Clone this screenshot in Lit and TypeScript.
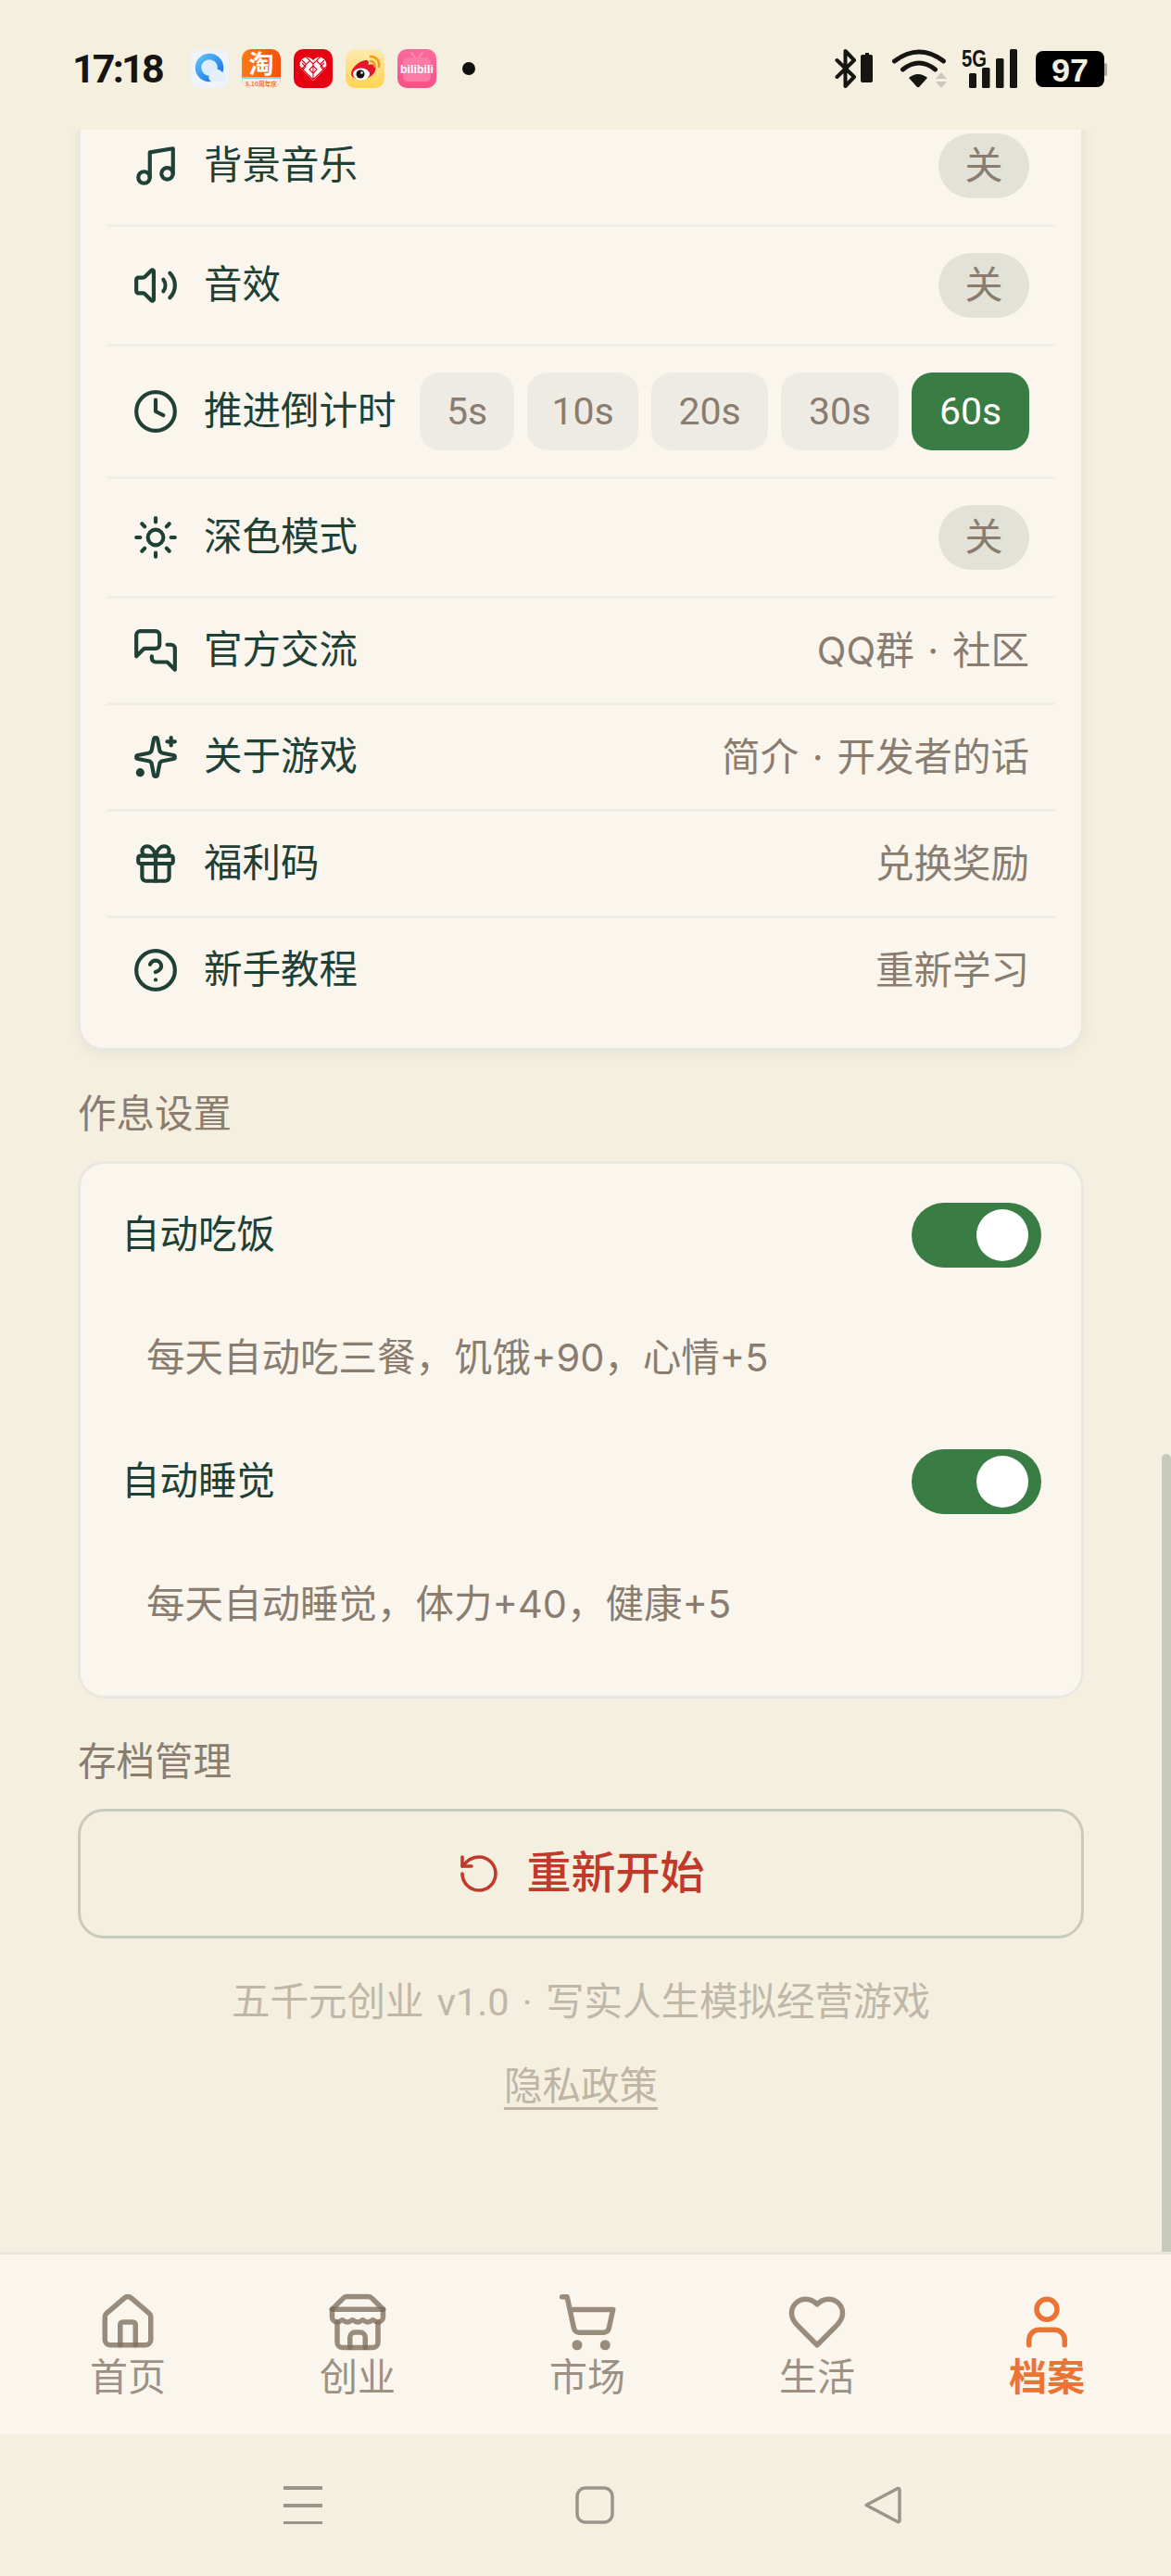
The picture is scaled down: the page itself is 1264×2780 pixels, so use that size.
import { LitElement, html, css, svg } from "lit";
import { customElement } from "lit/decorators.js";

const ICONS: Record<string, unknown> = {
  music: svg`<path d="M9 18V5l12-2v13"/><circle cx="6" cy="18" r="3"/><circle cx="18" cy="16" r="3"/>`,
  volume: svg`<path d="M11 4.702a.705.705 0 0 0-1.203-.498L6.413 7.587A1.4 1.4 0 0 1 5.416 8H3a1 1 0 0 0-1 1v6a1 1 0 0 0 1 1h2.416a1.4 1.4 0 0 1 .997.413l3.383 3.384A.705.705 0 0 0 11 19.298z"/><path d="M16 9a5 5 0 0 1 0 6"/><path d="M19.364 18.364a9 9 0 0 0 0-12.728"/>`,
  clock: svg`<circle cx="12" cy="12" r="10"/><path d="M12 6v6l4 2"/>`,
  sun: svg`<circle cx="12" cy="12" r="4"/><path d="M12 2v2"/><path d="M12 20v2"/><path d="m4.93 4.93 1.41 1.41"/><path d="m17.66 17.66 1.41 1.41"/><path d="M2 12h2"/><path d="M20 12h2"/><path d="m6.34 17.66-1.41 1.41"/><path d="m19.07 4.93-1.41 1.41"/>`,
  chat: svg`<path d="M14 9a2 2 0 0 1-2 2H6l-4 4V4a2 2 0 0 1 2-2h8a2 2 0 0 1 2 2z"/><path d="M18 9h2a2 2 0 0 1 2 2v11l-4-4h-6a2 2 0 0 1-2-2v-1"/>`,
  sparkles: svg`<path d="M11.017 2.814a1 1 0 0 1 1.966 0l1.051 5.558a2 2 0 0 0 1.594 1.594l5.558 1.051a1 1 0 0 1 0 1.966l-5.558 1.051a2 2 0 0 0-1.594 1.594l-1.051 5.558a1 1 0 0 1-1.966 0l-1.051-5.558a2 2 0 0 0-1.594-1.594l-5.558-1.051a1 1 0 0 1 0-1.966l5.558-1.051a2 2 0 0 0 1.594-1.594z"/><path d="M20 2v4"/><path d="M22 4h-4"/><circle cx="4" cy="20" r="1.200" fill="currentColor"/>`,
  gift: svg`<rect x="3" y="8" width="18" height="4" rx="1"/><path d="M12 8v13"/><path d="M19 12v7a2 2 0 0 1-2 2H7a2 2 0 0 1-2-2v-7"/><path d="M7.5 8a2.5 2.5 0 0 1 0-5A4.8 8 0 0 1 12 8a4.8 8 0 0 1 4.5-5 2.5 2.5 0 0 1 0 5"/>`,
  help: svg`<circle cx="12" cy="12" r="10"/><path d="M9.09 9a3 3 0 0 1 5.83 1c0 2-3 3-3 3"/><path d="M12 17h.01"/>`,
  reset: svg`<path d="M3 12a9 9 0 1 0 9-9 9.75 9.75 0 0 0-6.74 2.74L3 8"/><path d="M3 3v5h5"/>`,
  house: svg`<path d="M15 21v-8a1 1 0 0 0-1-1h-4a1 1 0 0 0-1 1v8"/><path d="M3 10a2 2 0 0 1 .709-1.528l7-5.999a2 2 0 0 1 2.582 0l7 5.999A2 2 0 0 1 21 10v9a2 2 0 0 1-2 2H5a2 2 0 0 1-2-2z"/>`,
  store: svg`<path d="m2 7 4.41-4.41A2 2 0 0 1 7.83 2h8.34a2 2 0 0 1 1.42.59L22 7"/><path d="M4 12v8a2 2 0 0 0 2 2h12a2 2 0 0 0 2-2v-8"/><path d="M15 22v-4a2 2 0 0 0-2-2h-2a2 2 0 0 0-2 2v4"/><path d="M2 7h20"/><path d="M22 7v3a2 2 0 0 1-2 2a2.7 2.7 0 0 1-1.59-.63.7.7 0 0 0-.82 0A2.7 2.7 0 0 1 16 12a2.7 2.7 0 0 1-1.59-.63.7.7 0 0 0-.82 0A2.7 2.7 0 0 1 12 12a2.7 2.7 0 0 1-1.59-.63.7.7 0 0 0-.82 0A2.7 2.7 0 0 1 8 12a2.7 2.7 0 0 1-1.59-.63.7.7 0 0 0-.82 0A2.7 2.7 0 0 1 4 12a2 2 0 0 1-2-2V7"/>`,
  cart: svg`<circle cx="8" cy="21" r="1"/><circle cx="19" cy="21" r="1"/><path d="M2.05 2.05h2l2.66 12.42a2 2 0 0 0 2 1.58h9.78a2 2 0 0 0 1.95-1.57l1.65-7.43H5.12"/>`,
  heart: svg`<path d="M19 14c1.49-1.46 3-3.21 3-5.5A5.5 5.5 0 0 0 16.5 3c-1.76 0-3 .5-4.5 2-1.5-1.5-2.74-2-4.5-2A5.5 5.5 0 0 0 2 8.5c0 2.3 1.5 4.05 3 5.5l7 7Z"/>`,
  user: svg`<path d="M19 21v-2a4 4 0 0 0-4-4H9a4 4 0 0 0-4 4v2"/><circle cx="12" cy="7" r="4"/>`,
};

const icon = (name: string, cls = "ico") =>
  html`<svg class=${cls} viewBox="0 0 24 24" fill="none" stroke="currentColor" stroke-width="2" stroke-linecap="round" stroke-linejoin="round">${ICONS[name]}</svg>`;

const appIcons = [
  svg`<defs><linearGradient id="qq" x1="0" y1="0" x2="1" y2="1"><stop offset="0" stop-color="#5cc0f7"/><stop offset="1" stop-color="#1470e6"/></linearGradient></defs>
    <rect width="42" height="42" rx="10" fill="#eef4fa"/>
    <circle cx="21" cy="20" r="12" fill="#dcecf9" stroke="url(#qq)" stroke-width="6.5"/>
    <path d="M23 35a5 5 0 0 1 0-9 6.5 6.5 0 0 1 11.5-1.5A5.5 5.5 0 0 1 36 35z" fill="#e4eff9"/>`,
  svg`<defs><linearGradient id="tb" x1="0" y1="0" x2="1" y2="0"><stop offset="0" stop-color="#ff7a12"/><stop offset="1" stop-color="#f4510b"/></linearGradient><clipPath id="tbc"><rect width="42" height="42" rx="10"/></clipPath></defs>
    <g clip-path="url(#tbc)"><rect width="42" height="42" fill="url(#tb)"/>
    <text x="21" y="26" text-anchor="middle" font-size="27" font-weight="700" fill="#fff" font-family="'Noto Sans CJK SC',sans-serif">淘</text>
    <rect y="30" width="42" height="12" fill="#f8efe2"/><rect y="30" width="42" height="2" fill="#8fd8c8"/>
    <text x="21" y="40" text-anchor="middle" font-size="6.5" font-weight="700" fill="#f0762b" font-family="'Noto Sans CJK SC',sans-serif" textLength="34" lengthAdjust="spacingAndGlyphs">5.10周年庆</text></g>`,
  svg`<defs><clipPath id="pdd"><path d="M21 34 7.500 20.500a8 8 0 0 1 13.500-8.500A8 8 0 0 1 34.500 20.500z"/></clipPath></defs>
    <rect width="42" height="42" rx="10" fill="#e60012"/>
    <path d="M21 34 7.500 20.500a8 8 0 0 1 13.500-8.500A8 8 0 0 1 34.500 20.500z" fill="#fff"/>
    <g clip-path="url(#pdd)" stroke="#e60012" stroke-width="1.100" fill="none">
      <path d="M5 17 21 33 37 17M5 25 17 13M37 25 25 13M13 8l8 8 8-8M21 16v17M9 12l4 4M33 12l-4 4"/>
      <path d="M9 15l4 4-4 4M33 15l-4 4 4 4M17 22l4 4 4-4-4-4z"/>
    </g>`,
  svg`<defs><linearGradient id="wb" x1="0" y1="0" x2="0" y2="1"><stop offset="0" stop-color="#fdeab0"/><stop offset="1" stop-color="#ffd452"/></linearGradient></defs>
    <rect width="42" height="42" rx="10" fill="url(#wb)"/>
    <path d="M6 27c0-7 9-14 15-15 4-.6 4.500 2 3.500 5 4-1 8-.5 8 3.500 0 7-8 12-15 12-6.500 0-11.500-2-11.500-5.500z" fill="#e6162d"/>
    <ellipse cx="17" cy="27" rx="9" ry="6.500" fill="#fff"/><circle cx="16" cy="27" r="4.500" fill="#111"/><circle cx="17.500" cy="25.500" r="1.300" fill="#fff"/>
    <path d="M27 8a9 9 0 0 1 9 11M27 13a4.500 4.500 0 0 1 4.500 5.500" fill="none" stroke="#f59a1b" stroke-width="2.600" stroke-linecap="round"/>`,
  svg`<defs><linearGradient id="bl" x1="0" y1="0" x2="0" y2="1"><stop offset="0" stop-color="#fb6a9c"/><stop offset="1" stop-color="#f84f88"/></linearGradient></defs>
    <rect width="42" height="42" rx="10" fill="url(#bl)"/>
    <path d="M15 4l4 5M27 4l-4 5" stroke="#fc8bb2" stroke-width="2" stroke-linecap="round"/>
    <rect x="6" y="9" width="30" height="26" rx="5" fill="#fb7aa6"/>
    <text x="21" y="26" text-anchor="middle" font-size="13" font-weight="700" fill="#fff" font-family="'Liberation Sans',sans-serif" textLength="36" lengthAdjust="spacingAndGlyphs">bilibili</text>`,
];

@customElement("app-root")
export class AppRoot extends LitElement {
  static styles = css`
    :host {
      display: flex;
      flex-direction: column;
      height: 2780px;
      overflow: hidden;
      background: #f5efdf;
      color: #1f4035;
      font-family: Roboto, "Noto Sans CJK SC", sans-serif;
      font-size: 41.5px;
      line-height: 56px;
    }
    .status {
      flex: none;
      height: 140px;
      box-sizing: border-box;
      padding: 53px 68px 0 78px;
      display: flex;
      align-items: flex-start;
    }
    .time {
      width: 127px;
      font-size: 43px;
      font-weight: 700;
      line-height: 42px;
      letter-spacing: -2.8px;
      color: #161512;
      font-family: Roboto, sans-serif;
    }
    .apps { display: flex; gap: 14px; }
    .apps svg { width: 42px; height: 42px; display: block; }
    .dot { width: 14px; height: 14px; border-radius: 50%; background: #111; margin: 14px 0 0 28px; }
    .sys { width: 295px; height: 44px; margin-left: auto; display: block; margin-top: -1px; }
    .main { flex: 1; min-height: 0; display: flex; overflow: hidden; }
    .scroll { flex: 1; min-width: 0; box-sizing: border-box; padding: 0 84px; }
    .track { flex: none; width: 10px; padding-top: 1429px; box-sizing: border-box; }
    .thumb { height: 100%; background: #c8cbbb; border-radius: 5px 5px 0 0; }
    .card {
      background: #faf6ee;
      border: 3px solid #e8e8e3;
      border-radius: 28px;
      box-sizing: border-box;
    }
    .list {
      margin-top: -55px;
      padding: 28px 28px;
      box-shadow: 0 4px 14px rgba(70, 60, 30, 0.06);
    }
    .row {
      display: flex;
      align-items: center;
      gap: 27px;
      padding: 28px;
      border-bottom: 3px solid #f0ede6;
    }
    .row:last-child { border-bottom: none; }
    .ico { width: 50px; height: 50px; flex: none; display: block; color: #1f4035; }
    .label { flex: 1; white-space: nowrap; }
    .value { color: #8a7d70; white-space: nowrap; word-spacing: 3px; font-family: Inter, "Noto Sans CJK SC", sans-serif; }
    .pill {
      width: 98px;
      height: 70px;
      border-radius: 35px;
      background: #e2e2d9;
      color: #8a7d70;
      font-size: 41px;
      display: flex;
      align-items: center;
      justify-content: center;
    }
    .times { display: grid; grid-template-columns: 102px 120px 126px 127px 127px; gap: 14px; margin-left: -4px; }
    .tbtn {
      height: 84px;
      border-radius: 22px;
      background: #eeebe4;
      color: #8a7d70;
      font-size: 41px;
      display: flex;
      align-items: center;
      justify-content: center;
    }
    .tbtn.on { background: #3a7d44; color: #fff; }
    .title { color: #8a7d70; line-height: 56px; margin: 41px 0 22px; }
    .rest { padding: 42px 43px 0 44px; }
    .rest-row { display: flex; align-items: center; justify-content: space-between; }
    .toggle {
      width: 140px;
      height: 70px;
      border-radius: 35px;
      background: #3a7d44;
      box-sizing: border-box;
      padding: 7px 14px;
      display: flex;
      justify-content: flex-end;
    }
    .knob { width: 56px; height: 56px; border-radius: 50%; background: #fff; }
    .desc {
      color: #8a7d70;
      line-height: 56px;
      margin: 69px 0 71px;
      padding-left: 27px;
      white-space: nowrap;
      font-family: Inter, "Noto Sans CJK SC", sans-serif;
    }
    .restart {
      height: 140px;
      border: 3px solid #c8cbbb;
      border-radius: 28px;
      box-sizing: border-box;
      display: flex;
      align-items: center;
      justify-content: center;
      gap: 27px;
      color: #c0392b;
      font-size: 48px;
      font-weight: 500;
    }
    .restart .ico { width: 48px; height: 48px; color: #c0392b; stroke-width: 1.8; }
    .foot { text-align: center; color: #bfb8a9; margin-top: 41px; line-height: 56px; word-spacing: 4px; }
    .privacy {
      text-align: center;
      color: #bfb5a4;
      margin-top: 35px;
      line-height: 56px;
      text-decoration: underline;
      text-decoration-thickness: 3px;
      text-underline-offset: 8px;
    }
    nav {
      flex: none;
      height: 196px;
      box-sizing: border-box;
      border-top: 3px solid #e8e6da;
      background: #faf6ee;
      padding: 40px 10px 0 14px;
      display: grid;
      grid-template-columns: repeat(5, 1fr);
    }
    .tab { display: flex; flex-direction: column; align-items: center; color: #9e9183; font-size: 41px; line-height: 50px; }
    .tab span { margin-top: 2px; }
    .tab svg { width: 66px; height: 66px; display: block; color: #7f6e5e; stroke-opacity: 0.78; }
    .tab.on { color: #e87435; font-weight: 700; }
    .tab.on svg { color: #e87435; stroke-opacity: 1; }
    .bar {
      flex: none;
      height: 154px;
      box-sizing: border-box;
      padding: 57px 0 0 306px;
      display: flex;
      gap: 271px;
      align-items: flex-start;
    }
    .bar svg { width: 42px; height: 41px; display: block; color: #9a958a; }
    .bar svg:nth-child(2) { margin: 0 -2px 0 2px; }
  `;

  render() {
    const rows = [
      { i: "music", t: "背景音乐", pill: "关" },
      { i: "volume", t: "音效", pill: "关" },
      { i: "clock", t: "推进倒计时", times: true },
      { i: "sun", t: "深色模式", pill: "关" },
      { i: "chat", t: "官方交流", v: "QQ群 · 社区" },
      { i: "sparkles", t: "关于游戏", v: "简介 · 开发者的话" },
      { i: "gift", t: "福利码", v: "兑换奖励" },
      { i: "help", t: "新手教程", v: "重新学习" },
    ];
    const times = ["5s", "10s", "20s", "30s", "60s"];
    const rest = [
      { t: "自动吃饭", d: "每天自动吃三餐，饥饿+90，心情+5" },
      { t: "自动睡觉", d: "每天自动睡觉，体力+40，健康+5" },
    ];
    const tabs = [
      { i: "house", t: "首页" },
      { i: "store", t: "创业" },
      { i: "cart", t: "市场" },
      { i: "heart", t: "生活" },
      { i: "user", t: "档案", on: true },
    ];
    return html`
      <div class="status">
        <div class="time">17:18</div>
        <div class="apps">${appIcons.map((a) => html`<svg viewBox="0 0 42 42">${a}</svg>`)}</div>
        <div class="dot"></div>
        <svg class="sys" viewBox="0 0 295 44">
          <path d="M2.500 13 21 31 11.500 41V3L21 13 2.500 31" fill="none" stroke="#161512" stroke-width="4" stroke-linecap="round" stroke-linejoin="round"/>
          <path d="M28 9a2 2 0 0 1 2-2h3V5h4v2h2a2 2 0 0 1 2 2v26a2 2 0 0 1-2 2H30a2 2 0 0 1-2-2z" fill="#161512"/>
          <g transform="translate(62 1)">
            <path d="M2.500 13Q29-7 55.500 13M11.500 22Q29 8 46.500 22" fill="none" stroke="#161512" stroke-width="5" stroke-linecap="round"/>
            <path d="M18 31Q28 23 38 31L29.500 40.500Q28 42 26.500 40.500Z" fill="#161512"/>
            <path d="M53 25l6 7H47zM47 35h12l-6 7z" fill="#cdcabd"/>
          </g>
          <text x="137" y="20" font-size="25" font-weight="700" fill="#161512" font-family="'Liberation Sans',sans-serif" textLength="27" lengthAdjust="spacingAndGlyphs">5G</text>
          <rect x="145" y="27" width="8" height="16" rx="1.500" fill="#161512"/>
          <rect x="159" y="21" width="8.500" height="22" rx="1.500" fill="#161512"/>
          <rect x="174" y="11" width="8.500" height="32" rx="1.500" fill="#161512"/>
          <rect x="189" y="1" width="8" height="42" rx="1.500" fill="#161512"/>
          <rect x="217" y="3" width="74" height="39" rx="8" fill="#000"/>
          <rect x="291" y="16" width="3" height="14" rx="1.500" fill="#aaa79b"/>
          <text x="234" y="36" font-size="35" font-weight="700" fill="#f5efdf" font-family="'Liberation Sans',sans-serif" textLength="40" lengthAdjust="spacingAndGlyphs">97</text>
        </svg>
      </div>
      <div class="main">
        <div class="scroll">
          <div class="card list">
            ${rows.map(
              (r) => html`<div class="row">
                ${icon(r.i)}
                <div class="label">${r.t}</div>
                ${r.pill ? html`<div class="pill">${r.pill}</div>` : ""}
                ${r.v ? html`<div class="value">${r.v}</div>` : ""}
                ${r.times
                  ? html`<div class="times">${times.map((t) => html`<div class="tbtn ${t === "60s" ? "on" : ""}">${t}</div>`)}</div>`
                  : ""}
              </div>`
            )}
          </div>
          <div class="title">作息设置</div>
          <div class="card rest">
            ${rest.map(
              (r) => html`<div class="rest-row"><div>${r.t}</div><div class="toggle"><div class="knob"></div></div></div>
                <div class="desc">${r.d}</div>`
            )}
          </div>
          <div class="title">存档管理</div>
          <div class="restart">${icon("reset")}<span>重新开始</span></div>
          <div class="foot">五千元创业 v1.0 · 写实人生模拟经营游戏</div>
          <div class="privacy">隐私政策</div>
        </div>
        <div class="track"><div class="thumb"></div></div>
      </div>
      <nav>
        ${tabs.map(
          (t) => html`<div class="tab ${t.on ? "on" : ""}">
            <svg viewBox="0 0 24 24" fill="none" stroke="currentColor" stroke-width="2" stroke-linecap="round" stroke-linejoin="round">${ICONS[t.i]}</svg>
            <span>${t.t}</span>
          </div>`
        )}
      </nav>
      <div class="bar">
        <svg viewBox="0 0 42 41"><path d="M0 2h42M0 21h42M0 40h42" stroke="currentColor" stroke-width="4"/></svg>
        <svg viewBox="0 0 42 41"><rect x="2" y="2" width="38" height="37" rx="9" fill="none" stroke="currentColor" stroke-width="3.500"/></svg>
        <svg viewBox="0 0 42 41"><path d="M3 20.500 37 2.500a1.500 1.500 0 0 1 2 1.500V37a1.500 1.500 0 0 1-2 1.500z" fill="none" stroke="currentColor" stroke-width="3.500" stroke-linejoin="round"/></svg>
      </div>
    `;
  }
}
